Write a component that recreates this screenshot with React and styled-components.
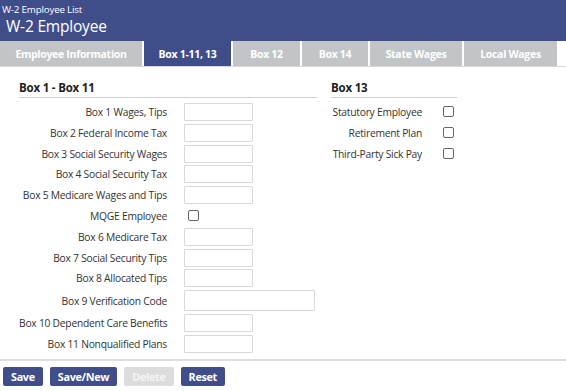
import React from "react";
import styled, { createGlobalStyle } from "styled-components";

const GlobalStyle = createGlobalStyle`
  body {
    margin: 0;
    background: #fff;
    font-family: "Open Sans", "Noto Sans", sans-serif;
    color: #333;
  }
`;

const tabs = [
  { label: "Employee Information", width: 142 },
  { label: "Box 1-11, 13", width: 87, active: true },
  { label: "Box 12", width: 67 },
  { label: "Box 14", width: 66 },
  { label: "State Wages", width: 92 },
  { label: "Local Wages", width: 93 },
];

const boxFields = [
  { label: "Box 1 Wages, Tips" },
  { label: "Box 2 Federal Income Tax" },
  { label: "Box 3 Social Security Wages" },
  { label: "Box 4 Social Security Tax" },
  { label: "Box 5 Medicare Wages and Tips" },
  { label: "MQGE Employee", check: true },
  { label: "Box 6 Medicare Tax" },
  { label: "Box 7 Social Security Tips" },
  { label: "Box 8 Allocated Tips" },
  { label: "Box 9 Verification Code", wide: true },
  { label: "Box 10 Dependent Care Benefits" },
  { label: "Box 11 Nonqualified Plans" },
];

const box13 = ["Statutory Employee", "Retirement Plan", "Third-Party Sick Pay"];

export default function App() {
  return (
    <>
      <GlobalStyle />
      <Page>
        <Header>
          <Crumb>W-2 Employee List</Crumb>
          <Title>W-2 Employee</Title>
        </Header>
        <TabBar>
          {tabs.map((t) => (
            <Tab key={t.label} $w={t.width} $active={t.active}>
              {t.label}
            </Tab>
          ))}
        </TabBar>
        <Content>
          <Section $w={298}>
            <SectionTitle>Box 1 - Box 11</SectionTitle>
            <FieldGrid>
              {boxFields.map((f) => (
                <React.Fragment key={f.label}>
                  <Label>{f.label}</Label>
                  {f.check ? (
                    <CheckWrap $pad={4}>
                      <Check type="checkbox" />
                    </CheckWrap>
                  ) : (
                    <TextInput $wide={f.wide} />
                  )}
                </React.Fragment>
              ))}
            </FieldGrid>
          </Section>
          <Section $w={126}>
            <SectionTitle>Box 13</SectionTitle>
            <CheckGrid>
              {box13.map((l) => (
                <React.Fragment key={l}>
                  <Label>{l}</Label>
                  <CheckWrap>
                    <Check type="checkbox" />
                  </CheckWrap>
                </React.Fragment>
              ))}
            </CheckGrid>
          </Section>
        </Content>
        <Footer>
          <Button>Save</Button>
          <Button>Save/New</Button>
          <Button disabled>Delete</Button>
          <Button>Reset</Button>
        </Footer>
      </Page>
    </>
  );
}

const Page = styled.div`
  width: 566px;
  height: 391px;
  display: flex;
  flex-direction: column;
  overflow: hidden;
`;

const Header = styled.div`
  height: 41px;
  background: #3f4e89;
  color: #fff;
  display: flex;
  flex-direction: column;
  padding: 3px 0 0 2px;
  box-sizing: border-box;
`;

const Crumb = styled.div`
  font-size: 9.8px;
  line-height: 13px;
  letter-spacing: -0.2px;
`;

const Title = styled.div`
  font-size: 15.5px;
  line-height: 20px;
  padding-left: 4px;
  letter-spacing: -0.2px;
`;

const TabBar = styled.div`
  display: flex;
  gap: 2px;
  height: 25px;
  border-bottom: 1px solid #d8d8d8;
`;

const Tab = styled.div`
  width: ${(p) => p.$w}px;
  flex: none;
  display: flex;
  align-items: center;
  justify-content: center;
  background: ${(p) => (p.$active ? "#3f4e89" : "#c1c5c7")};
  color: #fff;
  font-size: 10.5px;
  font-weight: 700;
  letter-spacing: -0.3px;
`;

const Content = styled.div`
  flex: 1;
  display: flex;
  gap: 14px;
  padding: 13px 0 0 19px;
`;

const Section = styled.div`
  width: ${(p) => p.$w}px;
  display: flex;
  flex-direction: column;
`;

const SectionTitle = styled.div`
  font-size: 11.5px;
  font-weight: 700;
  color: #222;
  line-height: 16px;
  padding-bottom: 1px;
  border-bottom: 1px solid #cfcfcf;
  letter-spacing: -0.2px;
`;

const FieldGrid = styled.div`
  display: grid;
  grid-template-columns: 148px auto;
  column-gap: 17px;
  row-gap: 2.8px;
  margin-top: 5px;
  align-items: center;
`;

const CheckGrid = styled.div`
  display: grid;
  grid-template-columns: 91px auto;
  column-gap: 21px;
  grid-auto-rows: 21px;
  margin-top: 3px;
  align-items: center;
`;

const Label = styled.div`
  text-align: right;
  font-size: 10.3px;
  color: #333;
  white-space: nowrap;
  letter-spacing: -0.25px;
`;

const TextInput = styled.input`
  box-sizing: border-box;
  width: ${(p) => (p.$wide ? 131 : 69)}px;
  height: ${(p) => (p.$wide ? 21 : 18)}px;
  border: 1px solid #d9d9d9;
  border-radius: 1px;
  background: #fff;
  margin: 0;
  padding: 0;
`;

const CheckWrap = styled.div`
  display: flex;
  align-items: center;
  height: 18px;
  padding-left: ${(p) => p.$pad || 0}px;
`;

const Check = styled.input`
  appearance: none;
  margin: 0;
  width: 11px;
  height: 11px;
  border: 1px solid #666;
  border-radius: 2px;
  background: #fff;
  box-sizing: border-box;
`;

const Footer = styled.div`
  border-top: 2px solid #dedede;
  height: 32px;
  box-sizing: border-box;
  display: flex;
  gap: 7px;
  padding: 6px 0 0 3px;
`;

const Button = styled.button`
  height: 19px;
  padding: 0 8px;
  border: none;
  border-radius: 2px;
  background: ${(p) => (p.disabled ? "#dcdcdc" : "#3f4e89")};
  color: ${(p) => (p.disabled ? "#f4f4f4" : "#fff")};
  font-family: "Open Sans", "Noto Sans", sans-serif;
  font-size: 10.8px;
  font-weight: 700;
  letter-spacing: -0.3px;
  line-height: 19px;
`;
